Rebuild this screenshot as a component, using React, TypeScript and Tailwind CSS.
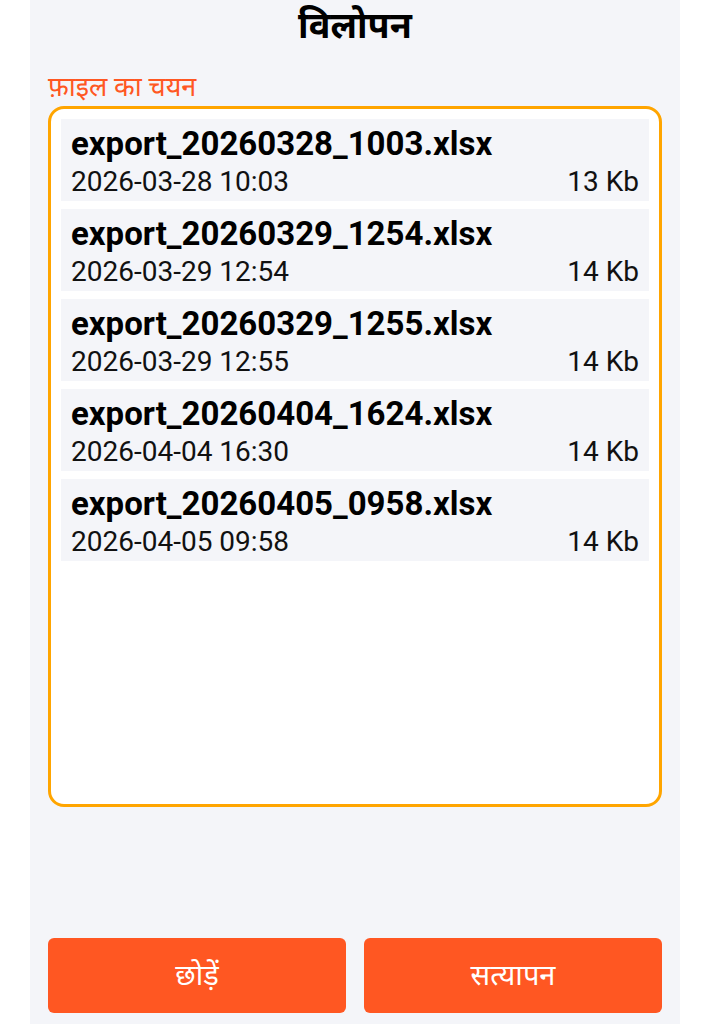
import React from "react";

type FileEntry = { name: string; date: string; size: string };

const files: FileEntry[] = [
  { name: "export_20260328_1003.xlsx", date: "2026-03-28 10:03", size: "13 Kb" },
  { name: "export_20260329_1254.xlsx", date: "2026-03-29 12:54", size: "14 Kb" },
  { name: "export_20260329_1255.xlsx", date: "2026-03-29 12:55", size: "14 Kb" },
  { name: "export_20260404_1624.xlsx", date: "2026-04-04 16:30", size: "14 Kb" },
  { name: "export_20260405_0958.xlsx", date: "2026-04-05 09:58", size: "14 Kb" },
];

const font = { fontFamily: 'Roboto, "Noto Sans", "Noto Sans Devanagari", sans-serif' };

function FileRow({ file }: { file: FileEntry }) {
  return (
    <div className="bg-[#f4f5f9] h-[82px] px-[10px] pt-[5px] flex flex-col">
      <div className="text-[33px] leading-[40px] font-bold text-black">{file.name}</div>
      <div className="flex justify-between text-[28px] leading-[36px] text-[#111]">
        <span>{file.date}</span>
        <span>{file.size}</span>
      </div>
    </div>
  );
}

export default function App() {
  return (
    <div className="w-[710px] h-[1024px] bg-white" style={font}>
      <div className="mx-[30px] w-[650px] h-[1024px] bg-[#f4f5f9] flex flex-col">
        <div className="h-[52px] flex items-center justify-center text-[36px] font-bold text-black">
          विलोपन
        </div>
        <div className="mt-[20px] mx-[18px] text-[27px] leading-[30px] text-[#ff5722]">
          फ़ाइल का चयन
        </div>
        <div className="mt-[4px] mx-[18px] h-[701px] bg-white border-[3px] border-[#ffa500] rounded-[16px] p-[10px] flex flex-col gap-[8px]">
          {files.map((f) => (
            <FileRow key={f.name} file={f} />
          ))}
        </div>
        <div className="mt-auto mb-[11px] mx-[18px] flex gap-[18px]">
          <button className="flex-1 h-[75px] rounded-[6px] bg-[#ff5722] text-white text-[29px]">
            छोड़ें
          </button>
          <button className="flex-1 h-[75px] rounded-[6px] bg-[#ff5722] text-white text-[29px]">
            सत्यापन
          </button>
        </div>
      </div>
    </div>
  );
}
